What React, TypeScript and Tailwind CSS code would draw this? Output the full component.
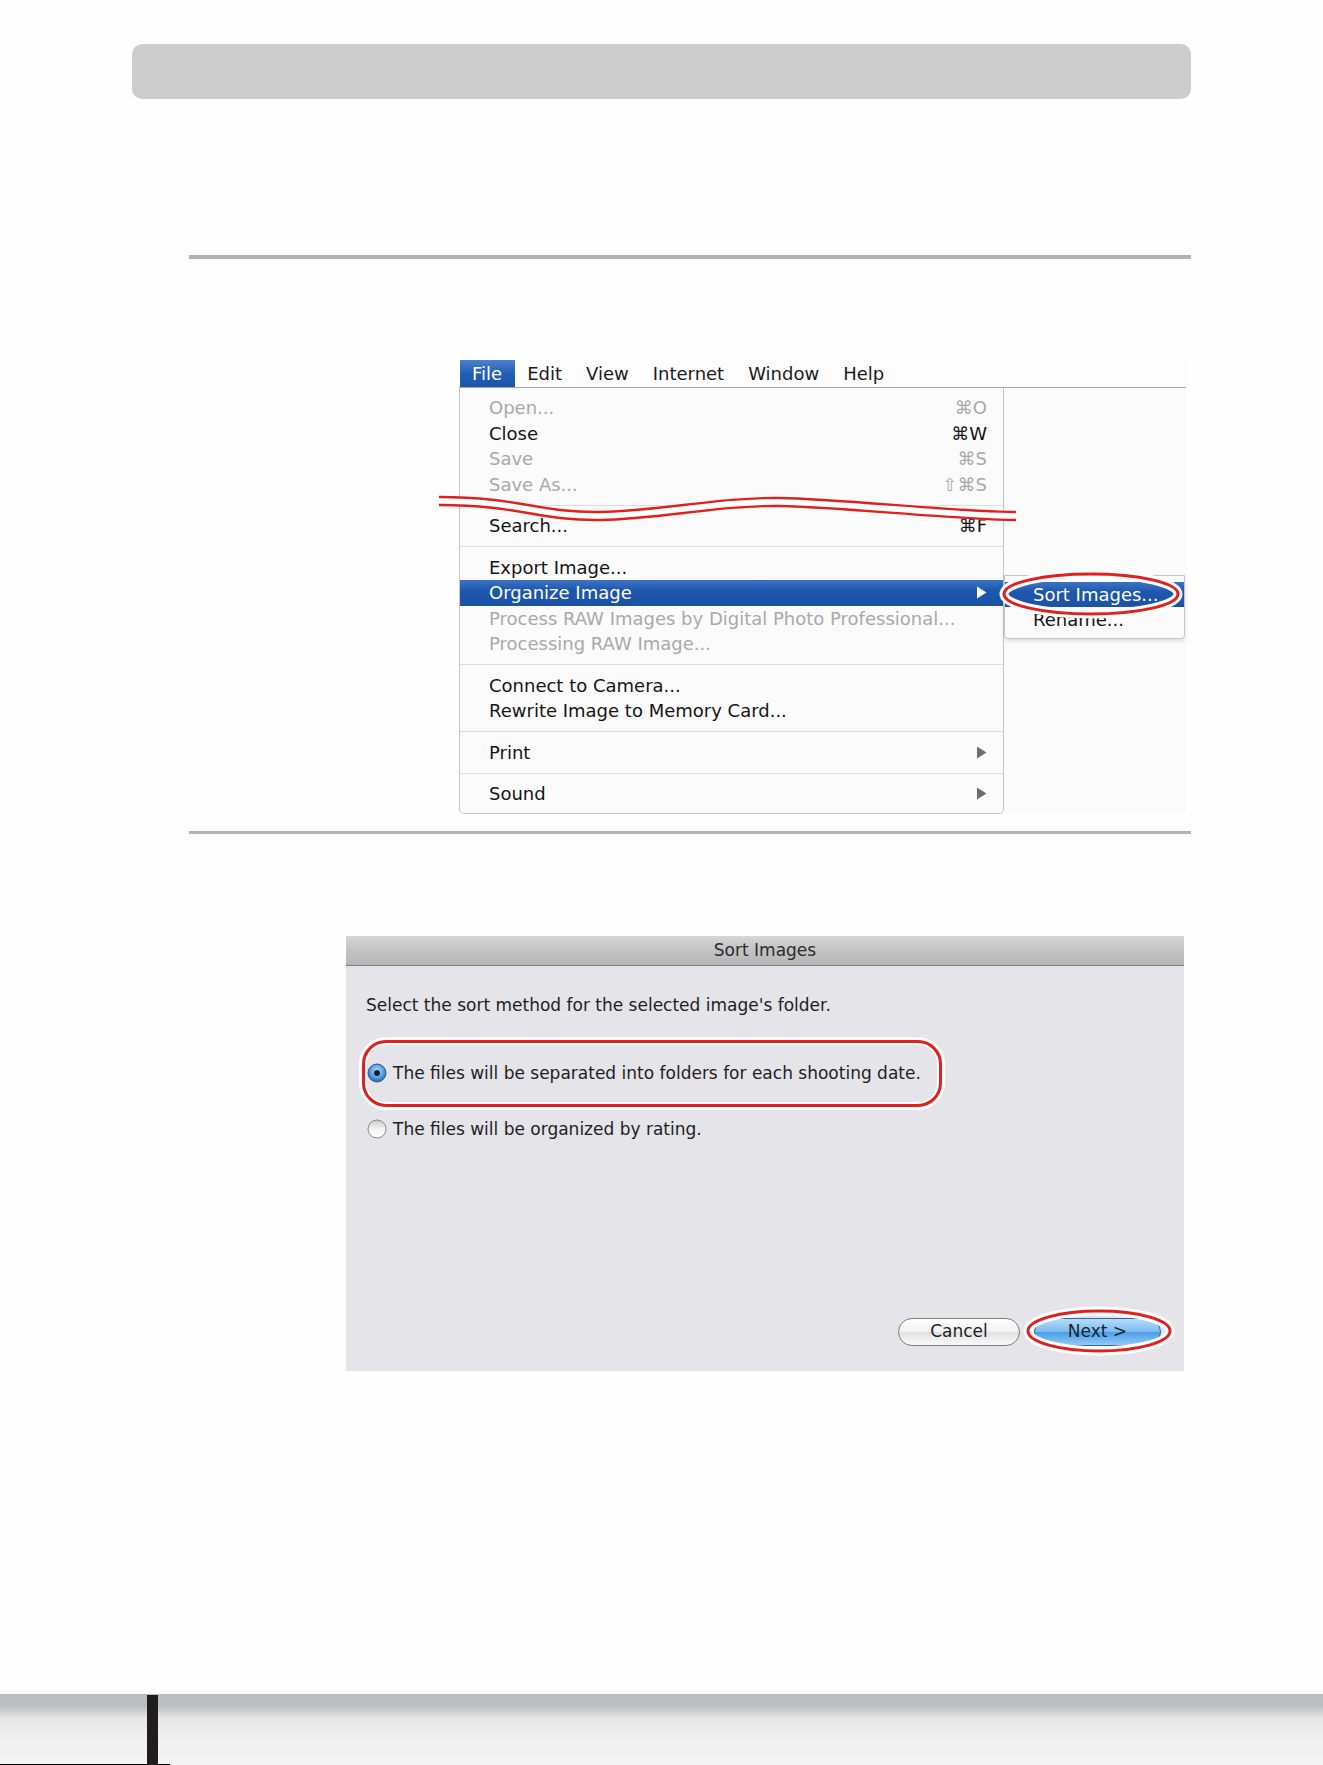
import React from "react";

type Item =
  | { kind: "sep" }
  | { kind: "row"; label: string; keys?: string; off?: boolean; sub?: boolean; active?: boolean };

const sep: Item = { kind: "sep" };

const fileMenu: Item[] = [
  { kind: "row", label: "Open...", keys: "⌘O", off: true },
  { kind: "row", label: "Close", keys: "⌘W" },
  { kind: "row", label: "Save", keys: "⌘S", off: true },
  { kind: "row", label: "Save As...", keys: "⇧⌘S", off: true },
  sep,
  { kind: "row", label: "Search...", keys: "⌘F" },
  sep,
  { kind: "row", label: "Export Image..." },
  { kind: "row", label: "Organize Image", sub: true, active: true },
  { kind: "row", label: "Process RAW Images by Digital Photo Professional...", off: true },
  { kind: "row", label: "Processing RAW Image...", off: true },
  sep,
  { kind: "row", label: "Connect to Camera..." },
  { kind: "row", label: "Rewrite Image to Memory Card..." },
  sep,
  { kind: "row", label: "Print", sub: true },
  sep,
  { kind: "row", label: "Sound", sub: true },
];

const menuBar = ["File", "Edit", "View", "Internet", "Window", "Help"];

function Arrow({ white }: { white?: boolean }) {
  return (
    <svg width="11" height="13" viewBox="0 0 11 13">
      <path d="M1 0.5 L10.5 6.5 L1 12.5 Z" fill={white ? "#ffffff" : "#6e6e6e"} />
    </svg>
  );
}

function MenuRow({ item }: { item: Item }) {
  if (item.kind === "sep") {
    return (
      <div className="h-[16px] flex items-center">
        <div className="h-px w-full bg-[#dedede]" />
      </div>
    );
  }
  const tone = item.active
    ? "text-white bg-[linear-gradient(to_bottom,#3c73c6,#1d57ad_40%,#1b52a6)]"
    : item.off
      ? "text-[#a9a9a9]"
      : "text-[#141414]";
  return (
    <div className={`h-[25.5px] flex items-center pl-[29px] pr-[16px] ${tone}`}>
      <span>{item.label}</span>
      <span className="ml-auto">{item.keys}</span>
      {item.sub && (
        <span className="ml-auto flex items-center">
          <Arrow white={item.active} />
        </span>
      )}
    </div>
  );
}

function BreakMark() {
  // torn-edge marker: white band between two red wavy strokes
  const mid = "M4 11 C85 11 105 27 165 26 S285 11 345 12 S525 26 581 26";
  const top = "M4 7 C85 7 105 23 165 22 S285 7 345 8 S525 22 581 22";
  const bot = "M4 15 C85 15 105 31 165 30 S285 15 345 16 S525 30 581 30";
  return (
    <svg className="absolute left-[-24px] top-[130px]" width="585" height="40" viewBox="0 0 585 40">
      <path d={mid} fill="none" stroke="#ffffff" strokeWidth="9" />
      <path d={top} fill="none" stroke="#e0201c" strokeWidth="2.4" />
      <path d={bot} fill="none" stroke="#e0201c" strokeWidth="2.4" />
    </svg>
  );
}

function MenuShot() {
  return (
    <div className="relative ml-[459px] w-[727px] h-[453px] bg-[#fbfbfb] text-[18px] font-['DejaVu_Sans',sans-serif]">
      <div className="h-[28px] flex items-stretch bg-[#fdfdfd] border-b border-[#a3a3a3] text-[#1a1a1a]">
        {menuBar.map((m, i) => (
          <div
            key={m}
            className={
              i === 0
                ? "flex items-center pl-[12px] pr-[13px] ml-px text-white bg-[linear-gradient(to_bottom,#4a80cf,#2160b8_50%,#1b55aa)]"
                : "flex items-center px-[12px]"
            }
          >
            {m}
          </div>
        ))}
      </div>

      <div className="w-[545px] pt-[7px] pb-[6px] bg-[#fbfbfb] border-x border-b border-[#c6c6c6] rounded-b-[5px]">
        {fileMenu.map((it, i) => (
          <MenuRow key={i} item={it} />
        ))}
      </div>

      <BreakMark />

      {/* Organize Image submenu */}
      <div className="absolute left-[545px] top-[215px] w-[181px] py-[6px] bg-[#fbfbfb] border border-[#c6c6c6] rounded-b-[4px] shadow-[0_2px_4px_rgba(0,0,0,0.12)]">
        <div className="h-[25px] flex items-center pl-[28px] text-white bg-[linear-gradient(to_bottom,#3c73c6,#1d57ad_40%,#1b52a6)]">
          Sort Images...
        </div>
        <div className="h-[25px] flex items-center pl-[28px] text-[#141414]">Rename...</div>
      </div>
      <svg className="absolute left-[537px] top-[204px]" width="190" height="60" viewBox="0 0 190 60">
        <ellipse cx="95" cy="30" rx="87" ry="20" fill="none" stroke="#ffffff" strokeWidth="9" />
        <ellipse cx="95" cy="30" rx="87" ry="20" fill="none" stroke="#e0201c" strokeWidth="3" />
      </svg>
    </div>
  );
}

function Radio({ on }: { on?: boolean }) {
  return on ? (
    <svg width="20" height="20" viewBox="0 0 20 20">
      <defs>
        <radialGradient id="rOn" cx="50%" cy="40%" r="60%">
          <stop offset="0%" stopColor="#cde8fb" />
          <stop offset="55%" stopColor="#5ba6e6" />
          <stop offset="100%" stopColor="#2566b3" />
        </radialGradient>
      </defs>
      <circle cx="10" cy="10" r="9" fill="url(#rOn)" stroke="#2e5b8e" strokeWidth="1" />
      <circle cx="10" cy="10" r="3" fill="#16202e" />
    </svg>
  ) : (
    <svg width="20" height="20" viewBox="0 0 20 20">
      <defs>
        <linearGradient id="rOff" x1="0" y1="0" x2="0" y2="1">
          <stop offset="0%" stopColor="#c9c9c9" />
          <stop offset="50%" stopColor="#f4f4f4" />
          <stop offset="100%" stopColor="#ffffff" />
        </linearGradient>
      </defs>
      <circle cx="10" cy="10" r="9" fill="url(#rOff)" stroke="#8a8a8a" strokeWidth="1" />
    </svg>
  );
}

function SortDialog() {
  return (
    <div className="relative ml-[346px] w-[838px] h-[435px] flex flex-col font-['DejaVu_Sans',sans-serif] text-[17px] text-[#1e1e1e]">
      <div className="h-[30px] flex items-center justify-center bg-[linear-gradient(to_bottom,#d6d6d6,#c3c3c3_50%,#b6b6b6)] border-b border-[#7f7f7f] text-[#2b2b2b]">
        Sort Images
      </div>
      <div className="flex-1 flex flex-col bg-[#e4e4e9] pl-[20px] pr-[23px] pb-[25px]">
        <p className="mt-[29px] leading-[20px]">Select the sort method for the selected image's folder.</p>
        <div className="mt-[48px] flex items-center gap-[6px] pl-[1px] leading-[20px]">
          <Radio on />
          <span>The files will be separated into folders for each shooting date.</span>
        </div>
        <div className="mt-[36px] flex items-center gap-[6px] pl-[1px] leading-[20px]">
          <Radio />
          <span>The files will be organized by rating.</span>
        </div>
        <div className="mt-auto flex justify-end gap-[14px]">
          <button
            type="button"
            className="w-[122px] h-[28px] rounded-full border border-[#7d7d7d] bg-[linear-gradient(to_bottom,#ffffff,#f1f1f1_50%,#e2e2e2_51%,#fafafa)] text-[17px] text-[#1e1e1e]"
          >
            Cancel
          </button>
          <button
            type="button"
            className="w-[127px] h-[28px] rounded-full border border-[#36659b] bg-[linear-gradient(to_bottom,#b5dcf8,#7dbbee_48%,#4d9ee6_52%,#8fcbf6)] text-[17px] text-[#13233a]"
          >
            Next &gt;
          </button>
        </div>
      </div>

      {/* callouts */}
      <div className="absolute left-[16px] top-[104px] w-[580px] h-[67px] rounded-[24px] border-[3px] border-[#e0201c] shadow-[0_0_0_3px_#ffffff,inset_0_0_0_2px_#ffffff]" />
      <svg className="absolute left-[676px] top-[369px]" width="154" height="52" viewBox="0 0 154 52">
        <ellipse cx="77" cy="26" rx="71" ry="20" fill="none" stroke="#ffffff" strokeWidth="9" />
        <ellipse cx="77" cy="26" rx="71" ry="20" fill="none" stroke="#e0201c" strokeWidth="3" />
      </svg>
    </div>
  );
}

export default function App() {
  return (
    <div className="w-[1323px] h-[1765px] bg-[#fefefe] flex flex-col overflow-hidden">
      <div className="mt-[44px] ml-[132px] w-[1059px] h-[55px] rounded-[10px] bg-[#cccccc]" />
      <div className="mt-[156px] ml-[189px] w-[1002px] h-[4px] bg-[#b3b3b3]" />
      <div className="mt-[101px]">
        <MenuShot />
      </div>
      <div className="mt-[18px] ml-[189px] w-[1002px] h-[3px] bg-[#b3b3b3]" />
      <div className="mt-[102px]">
        <SortDialog />
      </div>

      <div className="mt-auto h-[71px] flex bg-[linear-gradient(to_bottom,#bcbdbf_0px,#bdbebf_12px,#e6e6e6_24px,#efefef_40px,#f4f4f4_100%)]">
        <div className="w-[147px] border-b border-black" />
        <div className="w-[11px] mt-[1px] bg-[#1f1d1e]" />
        <div className="w-[12px] border-b border-black" />
        <div className="flex-1" />
      </div>
    </div>
  );
}
